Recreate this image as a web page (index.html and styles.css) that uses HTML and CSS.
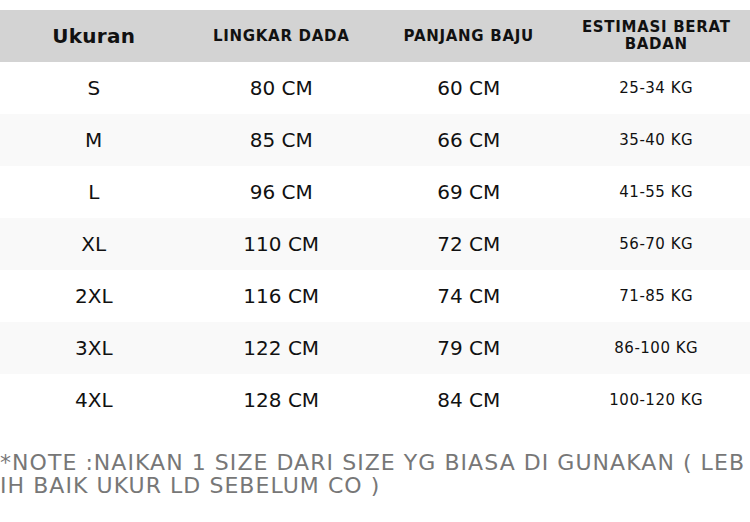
FILE: index.html
```html
<!DOCTYPE html>
<html>
<head>
<meta charset="utf-8">
<link rel="stylesheet" href="styles.css">
</head>
<body>
<div class="page">
<table class="size-table">
  <thead>
    <tr>
      <th class="h-main">Ukuran</th>
      <th>LINGKAR DADA</th>
      <th>PANJANG BAJU</th>
      <th>ESTIMASI BERAT<br>BADAN</th>
    </tr>
  </thead>
  <tbody>
    <tr><td>S</td><td>80 CM</td><td>60 CM</td><td class="kg">25-34 KG</td></tr>
    <tr><td>M</td><td>85 CM</td><td>66 CM</td><td class="kg">35-40 KG</td></tr>
    <tr><td>L</td><td>96 CM</td><td>69 CM</td><td class="kg">41-55 KG</td></tr>
    <tr><td>XL</td><td>110 CM</td><td>72 CM</td><td class="kg">56-70 KG</td></tr>
    <tr><td>2XL</td><td>116 CM</td><td>74 CM</td><td class="kg">71-85 KG</td></tr>
    <tr><td>3XL</td><td>122 CM</td><td>79 CM</td><td class="kg">86-100 KG</td></tr>
    <tr><td>4XL</td><td>128 CM</td><td>84 CM</td><td class="kg">100-120 KG</td></tr>
  </tbody>
</table>
<p class="note">*NOTE :NAIKAN 1 SIZE DARI SIZE YG BIASA DI GUNAKAN ( LEBIH BAIK UKUR LD SEBELUM CO )</p>
</div>
</body>
</html>
```
FILE: styles.css
```css
html, body {
  margin: 0;
  padding: 0;
  background: #ffffff;
}
.page {
  padding-top: 10px;
  font-family: "DejaVu Sans", sans-serif;
}
.size-table {
  width: 750px;
  border-collapse: collapse;
  table-layout: fixed;
}
.size-table th {
  background: #d3d3d3;
  height: 52px;
  padding: 0;
  font-size: 15px;
  font-weight: bold;
  line-height: 17px;
  letter-spacing: 0.7px;
  color: #111;
  text-align: center;
  vertical-align: middle;
}
.size-table th.h-main {
  font-size: 20px;
  letter-spacing: 0.3px;
}
.size-table td {
  height: 52px;
  padding: 0;
  font-size: 20px;
  color: #111;
  text-align: center;
  vertical-align: middle;
}
.size-table td.kg {
  font-size: 15px;
  letter-spacing: 0.5px;
}
.size-table tbody tr:nth-child(even) td {
  background: #f9f9f9;
}
.note {
  margin: 25px 0 0 0;
  font-size: 22px;
  line-height: 23px;
  letter-spacing: 1.05px;
  color: #777777;
  word-break: break-all;
}
```
